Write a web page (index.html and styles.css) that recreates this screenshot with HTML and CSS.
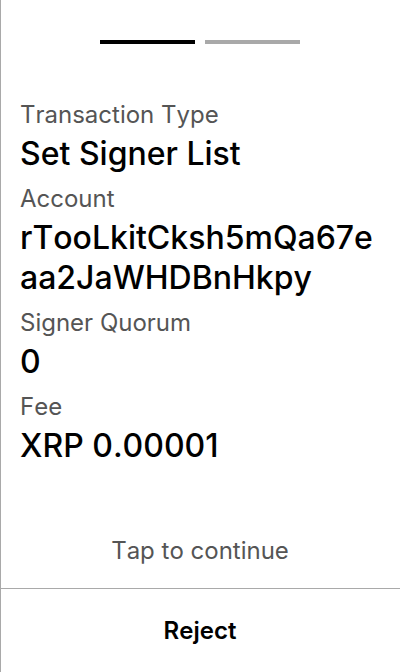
FILE: index.html
```html
<!DOCTYPE html>
<html lang="en">
<head>
<meta charset="utf-8">
<meta name="viewport" content="width=device-width, initial-scale=1">
<title>Review transaction</title>
<link rel="stylesheet" href="styles.css">
</head>
<body>
<main class="screen">
  <div class="pages">
    <span class="page page-current"></span>
    <span class="page"></span>
  </div>
  <dl class="fields">
    <dt>Transaction Type</dt>
    <dd>Set Signer List</dd>
    <dt>Account</dt>
    <dd>rTooLkitCksh5mQa67eaa2JaWHDBnHkpy</dd>
    <dt>Signer Quorum</dt>
    <dd>0</dd>
    <dt>Fee</dt>
    <dd>XRP 0.00001</dd>
  </dl>
  <button class="continue" type="button">Tap to continue</button>
  <button class="reject" type="button">Reject</button>
</main>
</body>
</html>
```
FILE: styles.css
```css
* {
  box-sizing: border-box;
}

body {
  margin: 0;
  background: #fff;
  color: #000;
  font-family: Inter, "Liberation Sans", sans-serif;
  font-kerning: none;
}

.screen {
  display: flex;
  flex-direction: column;
  min-height: 100vh;
  box-shadow: inset 1px 0 #a9a9a9;
}

.pages {
  display: flex;
  justify-content: center;
  gap: 10px;
  padding-top: 40px;
}

.page {
  width: 95px;
  height: 4px;
  background: #a9a9a9;
}

.page-current {
  background: #000;
}

.fields {
  margin: 55px 20px 0;
}

.fields dt {
  margin-bottom: 3px;
  color: #555;
  font-size: 24px;
  line-height: 32px;
}

.fields dd {
  margin: 0 0 9px;
  font-size: 32px;
  font-weight: 500;
  line-height: 40px;
  overflow-wrap: anywhere;
}

button {
  border: 0;
  background: none;
  color: inherit;
  font-family: inherit;
  font-size: 24px;
  font-kerning: inherit;
}

.continue {
  margin-top: auto;
  padding: 19px 20px;
  color: #555;
  line-height: 36px;
}

.reject {
  height: 84px;
  border-top: 1px solid #a9a9a9;
  font-weight: 600;
}
```
